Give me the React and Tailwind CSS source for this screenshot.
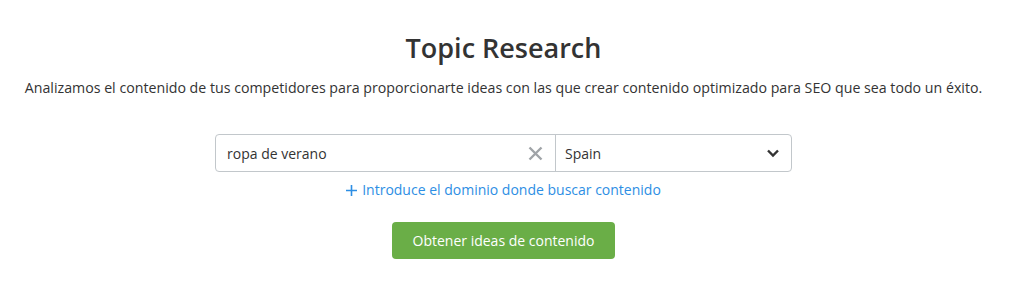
export default function App() {
  return (
    <div className="flex h-[304px] w-full flex-col items-center bg-white pr-[3px] pt-[30px] font-['Open_Sans',sans-serif] text-[#333]">
      <h1 className="text-[27px] font-semibold leading-[36px] text-[#333]">Topic Research</h1>
      <p className="mt-[12px] text-[14.2px] leading-[20px] text-[#333]">
        Analizamos el contenido de tus competidores para proporcionarte ideas con las que crear contenido optimizado para SEO que sea todo un éxito.
      </p>

      <div className="mt-[36px] flex h-[38px] w-[577px] rounded-[4px] border border-[#c2c7cb]">
        <div className="flex w-[340px] items-center border-r border-[#c2c7cb] pl-[11px] pr-[12px]">
          <span className="flex-1 text-[14px] text-[#333]">ropa de verano</span>
          <svg width="15" height="15" viewBox="0 0 15 15" className="text-[#a0a4a8]">
            <path d="M1.5 1.5 L13.5 13.5 M13.5 1.5 L1.5 13.5" stroke="currentColor" strokeWidth="2.4" />
          </svg>
        </div>
        <div className="flex flex-1 items-center pl-[9px] pr-[11px]">
          <span className="flex-1 text-[14px] text-[#333]">Spain</span>
          <svg width="14" height="10" viewBox="0 0 14 10" className="text-[#333]">
            <path d="M2 2.5 L7 7.5 L12 2.5" stroke="currentColor" strokeWidth="2.4" fill="none" />
          </svg>
        </div>
      </div>

      <button className="mt-[8px] flex items-center gap-[5px] text-[14px] leading-[20px] text-[#2d8ee4]">
        <svg width="11" height="11" viewBox="0 0 11 11">
          <path d="M5.5 0 V11 M0 5.5 H11" stroke="currentColor" strokeWidth="1.6" />
        </svg>
        Introduce el dominio donde buscar contenido
      </button>

      <button className="mt-[22px] h-[37px] w-[223px] rounded-[4px] bg-[#6aae47] text-[14px] text-white">
        Obtener ideas de contenido
      </button>
    </div>
  );
}
